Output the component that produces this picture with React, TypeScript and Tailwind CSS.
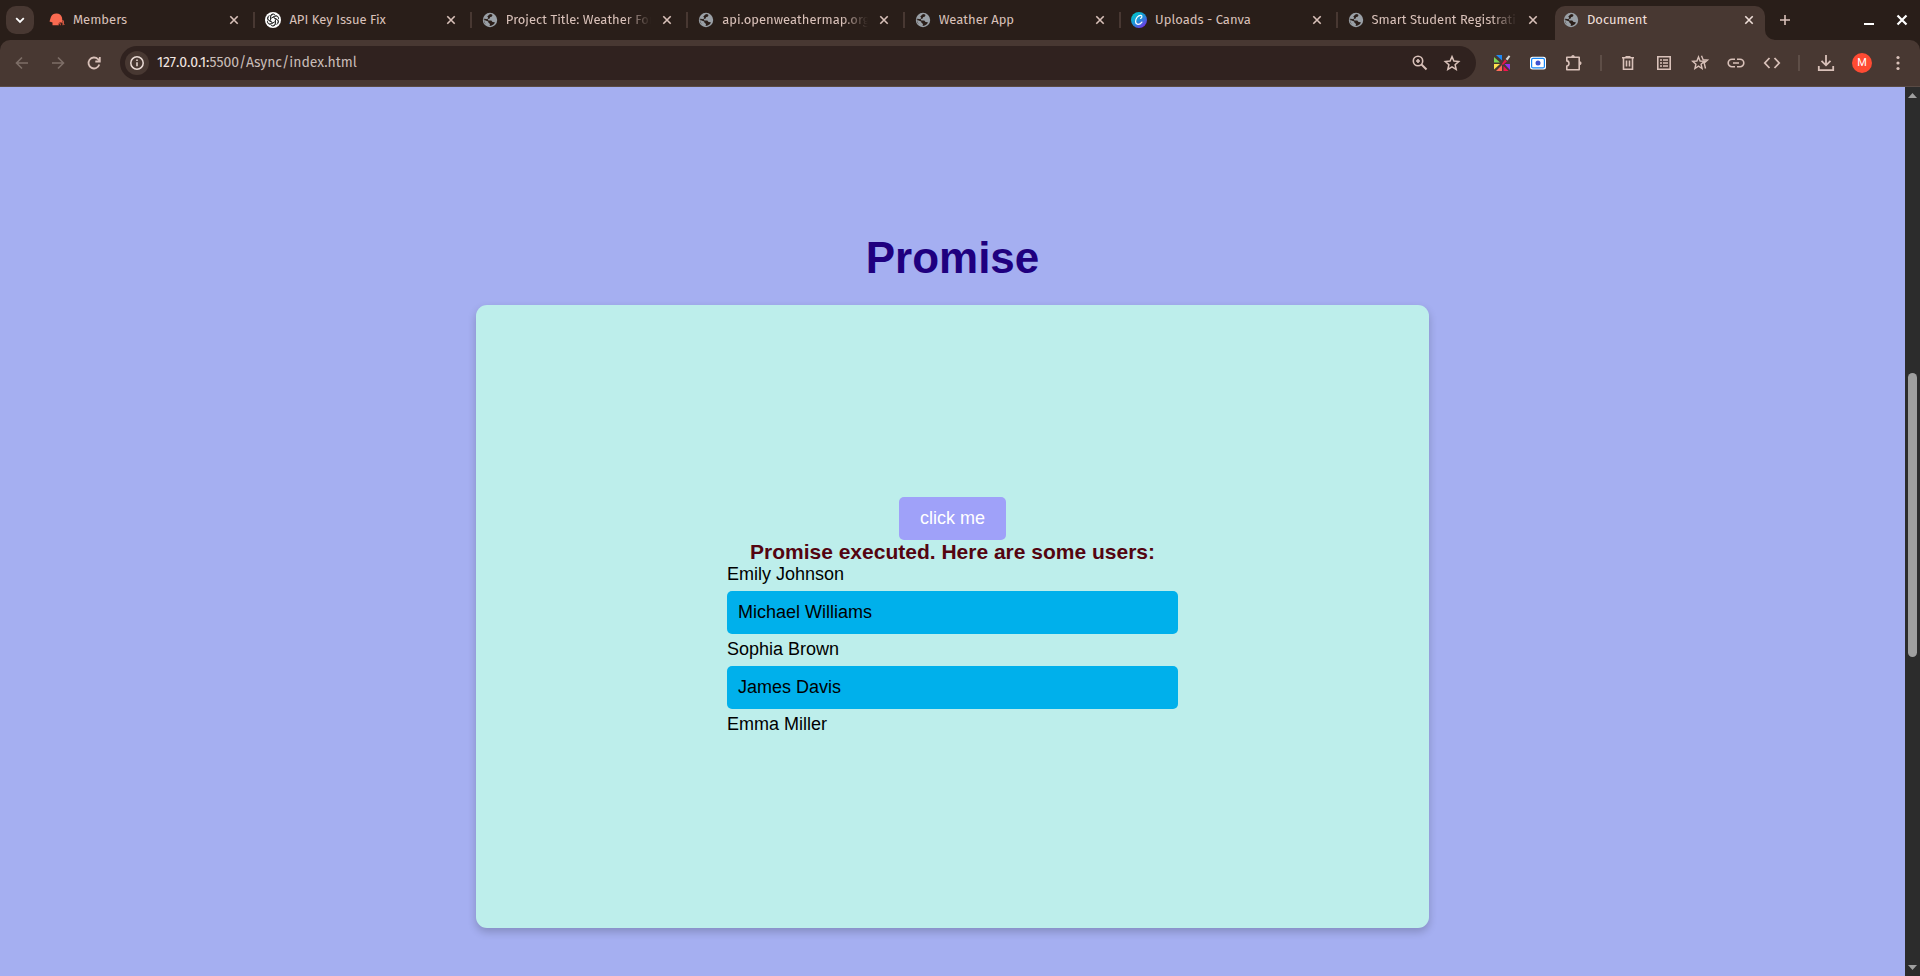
import React from "react";

type TabIcon = "members" | "openai" | "globe" | "canva";

const tabs: { title: string; icon: TabIcon; fade?: boolean }[] = [
  { title: "Members", icon: "members" },
  { title: "API Key Issue Fix", icon: "openai" },
  { title: "Project Title: Weather For", icon: "globe", fade: true },
  { title: "api.openweathermap.org", icon: "globe", fade: true },
  { title: "Weather App", icon: "globe" },
  { title: "Uploads - Canva", icon: "canva" },
  { title: "Smart Student Registrati", icon: "globe", fade: true },
];

const users = ["Emily Johnson", "Michael Williams", "Sophia Brown", "James Davis", "Emma Miller"];

function Globe() {
  return (
    <svg viewBox="0 0 16 16" className="size-4 shrink-0" aria-hidden="true">
      <circle cx="8" cy="8" r="7.2" fill="#9aa0a6" />
      <path d="M7.3 2.5 9 2.100l1.500.8-.6 1.500-1.900.8-.3 1.400-1.800.5.400 1.300h3l1.200 1.600 2.400.3-.8 1.700-2.300 1.600-2.200.4.400-1.900-1.700-1.600-.1-1.100L3 8.200l-.9-.9.300 2.700 1.700 2.600-1.800-2L1.700 7l.9-.3 2.900.6.7-1.700-1-.9z" fill="#2a1e19" />
    </svg>
  );
}

function Favicon({ icon }: { icon: TabIcon }) {
  if (icon === "globe") return <Globe />;
  if (icon === "members")
    return (
      <svg viewBox="0 0 16 16" className="size-4 shrink-0" aria-hidden="true">
        <path d="M.5 9.500 2 4.800A6 6 0 0 1 13 5.500l.5 4.500H11l-1.600 3.200H3.500v-2.700z" fill="#f96a50" />
        <path d="M9.300 13.200c0-2.300 1.800-2.900 4.600-2.700v2.700M11.400 13.200v-1.400" fill="none" stroke="#b84b38" strokeWidth="1.100" />
        <path d="M13 8.800h1.500v3.700h1" fill="none" stroke="#d95b45" strokeWidth="0.900" />
      </svg>
    );
  if (icon === "openai")
    return (
      <svg viewBox="0 0 16 16" className="size-4 shrink-0" aria-hidden="true">
        <circle cx="8" cy="8" r="8" fill="#fff" />
        <g fill="none" stroke="#222" strokeWidth="0.8">
          {[0, 60, 120, 180, 240, 300].map((a) => (
            <path key={a} d="M5.500 8.200V4.400A2.600 2.600 0 0 1 10.100 2.900M6.200 6.300l3.200-1.900a2.600 2.600 0 0 1 3.700 1.200" transform={`rotate(${a} 8 8)`} />
          ))}
        </g>
      </svg>
    );
  return (
    <svg viewBox="0 0 16 16" className="size-4 shrink-0" aria-hidden="true">
      <defs>
        <linearGradient id="canva" x1="0.1" y1="0.1" x2="0.8" y2="1">
          <stop offset="0" stopColor="#00c9cc" />
          <stop offset="0.5" stopColor="#1f8fd8" />
          <stop offset="1" stopColor="#7d2ae8" />
        </linearGradient>
      </defs>
      <circle cx="8" cy="8" r="8" fill="url(#canva)" />
      <path d="M9.600 6.300c1.400-.3 1.900-2.600.3-2.900C7.200 3 4.500 6.500 4.600 9.600c.1 3.600 4 3.700 6.300.5" fill="none" stroke="#fff" strokeWidth="1.200" strokeLinecap="round" />
    </svg>
  );
}

function Cross() {
  return (
    <svg viewBox="0 0 16 16" className="size-4" fill="none" stroke="currentColor" strokeWidth="1.6" aria-hidden="true">
      <path d="m4.300 4.300 7.400 7.400M11.700 4.300l-7.400 7.400" />
    </svg>
  );
}

function Icon({ children, label, dim }: { children: React.ReactNode; label: string; dim?: boolean }) {
  return (
    <button type="button" aria-label={label} className={dim ? "text-[#7d6e67]" : "text-[#d9c1b9]"}>
      <svg viewBox="0 0 20 20" className="size-5" fill="none" stroke="currentColor" strokeWidth="1.6">
        {children}
      </svg>
    </button>
  );
}

function TabStrip() {
  return (
    <div className="flex h-10 items-center bg-[#291e19] pl-[6px]">
      <button type="button" aria-label="Search tabs" className="flex size-7 shrink-0 items-center justify-center rounded-[10px] bg-[#483832] text-white">
        <svg viewBox="0 0 16 16" className="size-4" fill="none" stroke="currentColor" strokeWidth="1.8">
          <path d="m4.200 6.200 3.800 3.800 3.800-3.800" />
        </svg>
      </button>
      <div className="flex min-w-0 flex-1 items-center pl-[5px]">
        <div className="flex max-w-[1515px] min-w-0 flex-1">
          {tabs.map((tab, i) => (
            <div key={tab.title} className="flex h-10 min-w-0 flex-1 items-center text-[#d9c1b9]">
              <div className="flex min-w-0 flex-1 items-center pl-[10px]">
                <Favicon icon={tab.icon} />
                <span
                  className={
                    tab.fade
                      ? "ml-2 min-w-0 flex-1 overflow-hidden text-[13px] leading-5 whitespace-nowrap [mask-image:linear-gradient(to_right,#000_82%,transparent)]"
                      : "ml-2 min-w-0 flex-1 overflow-hidden text-[13px] leading-5 whitespace-nowrap"
                  }
                >
                  {tab.title}
                </span>
                <button type="button" aria-label={`Close ${tab.title}`} className="ml-2 shrink-0">
                  <Cross />
                </button>
              </div>
              <span className={i < tabs.length - 1 ? "ml-[11px] h-4 w-[2px] shrink-0 bg-[#483832]" : "ml-[11px] w-[2px] shrink-0"} />
            </div>
          ))}
        </div>
        <div className="ml-px flex h-[34px] w-[210px] min-w-0 items-center self-end rounded-t-[10px] bg-[#483832] px-2 pb-[6px] text-[#efdfd9]">
          <Globe />
          <span className="ml-2 flex-1 text-[13px] leading-5 whitespace-nowrap">Document</span>
          <button type="button" aria-label="Close Document" className="shrink-0">
            <Cross />
          </button>
        </div>
        <svg viewBox="0 0 10 10" className="size-[10px] shrink-0 self-end" aria-hidden="true">
          <path d="M0 0a10 10 0 0 0 10 10H0z" fill="#483832" />
        </svg>
        <button type="button" aria-label="New tab" className="ml-[2px] shrink-0 text-[#d9c1b9]">
          <svg viewBox="0 0 16 16" className="size-4" fill="none" stroke="currentColor" strokeWidth="1.6">
            <path d="M8 3v10M3 8h10" />
          </svg>
        </button>
      </div>
      <div className="flex shrink-0 items-center gap-[15px] pr-[9px] text-white">
        <button type="button" aria-label="Minimize">
          <svg viewBox="0 0 18 18" className="size-[18px]">
            <path d="M4 12h10v2H4z" fill="currentColor" />
          </svg>
        </button>
        <button type="button" aria-label="Close window">
          <svg viewBox="0 0 18 18" className="size-[18px]" fill="none" stroke="currentColor" strokeWidth="2.2">
            <path d="m4.500 4.500 9 9M13.500 4.500l-9 9" />
          </svg>
        </button>
      </div>
    </div>
  );
}

function Toolbar() {
  return (
    <div className="bg-[#291e19]">
      <div className="flex h-[47px] items-center rounded-t-[10px] border-b border-[#5a4b45] bg-[#483832] px-3">
        <div className="flex shrink-0 items-center gap-4">
          <Icon label="Back" dim>
            <path d="M16 10H5M10 4.500 4.500 10l5.500 5.500" />
          </Icon>
          <Icon label="Forward" dim>
            <path d="M4 10h11M10 4.500l5.500 5.500-5.500 5.500" />
          </Icon>
          <Icon label="Reload">
            <path d="M15.300 11.500A5.500 5.500 0 1 1 14 6.200l1.600 1.700" strokeWidth="1.8" />
            <path d="M15.800 4v4.500h-4.500" strokeWidth="1.8" />
          </Icon>
        </div>
        <div className="ml-4 flex h-[34px] min-w-0 flex-1 items-center rounded-full bg-[#30221f] pr-[14px] pl-[5px]">
          <button type="button" aria-label="Site information" className="flex size-6 shrink-0 items-center justify-center rounded-full bg-[#483832] text-[#eadbd6]">
            <svg viewBox="0 0 16 16" className="size-4" fill="none" stroke="currentColor" strokeWidth="1.5">
              <circle cx="8" cy="8" r="6.200" />
              <path d="M8 7.200v4M8 4.600v1.500" />
            </svg>
          </button>
          <div className="ml-2 flex-1 text-[14px] leading-5 whitespace-nowrap text-[#c9bdb8]">
            <span className="text-[#f3e6e1]">127.0.0.1:</span>5500/Async/index.html
          </div>
          <div className="flex shrink-0 items-center gap-3">
            <Icon label="Zoom">
              <circle cx="8" cy="8" r="4.700" />
              <path d="m11.500 11.500 5 5" strokeWidth="2" />
              <path d="M8 6v4M6 8h4" />
            </Icon>
            <Icon label="Bookmark">
              <path d="m10 3.600 1.900 4.500 4.800.4-3.600 3.200 1.100 4.700-4.200-2.500-4.200 2.500 1.100-4.700-3.600-3.200 4.800-.4z" strokeWidth="1.5" />
            </Icon>
          </div>
        </div>
        <div className="ml-4 flex shrink-0 items-center gap-4">
          <button type="button" aria-label="Color picker">
            <svg viewBox="0 0 20 20" className="size-5">
              <path d="M4 2h6v5.500z" fill="#1e88f5" />
              <path d="M2 4v5.500h6z" fill="#7ed957" />
              <path d="M2 11h6l-6 5.500z" fill="#ffe14d" />
              <path d="M4 18l6-6v6z" fill="#ff6b57" />
              <path d="M11.500 13 16.500 18H11.500z" fill="#f5124f" />
              <path d="M12.500 11H18v6z" fill="#9333ea" />
              <path d="m9.500 11.500 3.500-5 2 1.700-3.800 3.600z" fill="#e8174b" />
              <path d="m13.600 6 3.200-3.800 1.500 1.300L15.500 7.500z" fill="#d5d5d5" />
            </svg>
          </button>
          <button type="button" aria-label="Screenshot">
            <svg viewBox="0 0 20 20" className="size-5">
              <rect x="2" y="3.800" width="16" height="12.600" rx="2.500" fill="#fff" />
              <rect x="3.600" y="5.300" width="12.800" height="9.600" rx="1.500" fill="#fff" stroke="#1687f7" strokeWidth="1.2" />
              <circle cx="10" cy="10" r="2.500" fill="#3f51cf" />
            </svg>
          </button>
          <Icon label="Extensions">
            <path d="M2.800 4.300h12.400v12.400H2.800v-3.600c2.900-.4 2.900-4.800 0-5.200z" strokeLinejoin="round" />
            <path d="M7.200 4c0-2.700 3.600-2.700 3.600 0zM15.600 8.200c2.600 0 2.600 3.800 0 3.800z" fill="currentColor" stroke="none" />
          </Icon>
          <span className="h-4 w-[2px] bg-[#5e4e47]" />
          <Icon label="Delete browsing data">
            <path d="M4 4.800h12M7.500 3.700h5M5.500 5v11.200h9V5M8.500 7.500v6M11.500 7.500v6" />
          </Icon>
          <Icon label="Reading list">
            <path d="M3.800 3.800h12.400v12.400H3.800zM6 7h2M9 7h5M6 10h2M9 10h5M6 13h2M9 13h5" />
          </Icon>
          <Icon label="Bookmarks">
            <path d="m8.500 4 1.600 4 4.200.4-3.200 2.800 1 4.300-3.600-2.300-3.600 2.300 1-4.300L2.700 8.400 6.900 8zM11.500 2.700l1.600 4 4.400.4-3.300 2.800 1.300 5.600" strokeWidth="1.4" />
          </Icon>
          <Icon label="Copy link">
            <path d="M9 6.200H6a3.800 3.800 0 0 0 0 7.600h3M11 6.200h3a3.800 3.800 0 0 1 0 7.600h-3M7 10h6" />
          </Icon>
          <Icon label="Developer tools">
            <path d="M7.500 5 2.800 10l4.700 5M12.500 5l4.700 5-4.700 5" strokeWidth="1.8" />
          </Icon>
          <span className="h-4 w-[2px] bg-[#5e4e47]" />
          <Icon label="Downloads">
            <path d="M10 2v10M5.500 7.800 10 12.300l4.500-4.500M2.800 13v4.200h14.400V13" strokeWidth="1.8" />
          </Icon>
          <button type="button" aria-label="Profile" className="flex size-5 items-center justify-center rounded-full bg-[#ff4b33] font-[Roboto,sans-serif] text-[11px] leading-5 font-normal text-white">
            M
          </button>
          <Icon label="Menu">
            <g fill="currentColor" stroke="none">
              <circle cx="10" cy="4.500" r="1.600" />
              <circle cx="10" cy="10" r="1.600" />
              <circle cx="10" cy="15.500" r="1.600" />
            </g>
          </Icon>
        </div>
      </div>
    </div>
  );
}

function Scrollbar() {
  return (
    <div className="flex w-[15px] shrink-0 flex-col items-center justify-between bg-[#2c2c2c] py-[6px]" aria-hidden="true">
      <svg viewBox="0 0 9 5" className="h-[5px] w-[9px]">
        <path d="M0 5 4.500 0 9 5z" fill="#9f9f9f" />
      </svg>
      <div className="flex w-[9px] flex-1 flex-col">
        <div className="flex-[275]" />
        <div className="flex-[284] rounded-full bg-[#9f9f9f]" />
        <div className="flex-[308]" />
      </div>
      <svg viewBox="0 0 9 5" className="h-[5px] w-[9px]">
        <path d="M0 0h9L4.500 5z" fill="#9f9f9f" />
      </svg>
    </div>
  );
}

export default function App() {
  return (
    <div className="flex min-h-screen flex-col">
      <header className="font-['Fira_Sans','Noto_Sans',sans-serif]">
        <TabStrip />
        <Toolbar />
      </header>
      <div className="flex flex-1">
        <main className="flex flex-1 flex-col items-center justify-end bg-[#a5aff1] pb-12 font-['Liberation_Sans',Arial,sans-serif]">
          <h1 className="mb-[22px] text-[44px] leading-[50px] font-bold text-[#1f007f]">Promise</h1>
          <section className="flex min-h-[623px] w-1/2 flex-col items-center justify-center rounded-[11px] bg-[#bdeeeb] pb-[2px] shadow-[0_4px_9px_rgba(0,0,0,0.2)]">
            <button type="button" className="rounded-[5px] bg-[#9fa1f9] px-[21px] py-[11px] text-[18px] leading-[21px] text-white">
              click me
            </button>
            <h2 className="text-[21px] leading-6 font-bold text-[#540410]">Promise executed. Here are some users:</h2>
            <ul className="flex w-[451px] max-w-full flex-col gap-[5px] text-[18px] leading-5 text-black">
              {users.map((user, i) => (
                <li key={user} className={i % 2 === 1 ? "mt-[2px] rounded-[5px] bg-[#00b0eb] px-[11px] pt-[11px] pb-3" : ""}>
                  {user}
                </li>
              ))}
            </ul>
          </section>
        </main>
        <Scrollbar />
      </div>
    </div>
  );
}
